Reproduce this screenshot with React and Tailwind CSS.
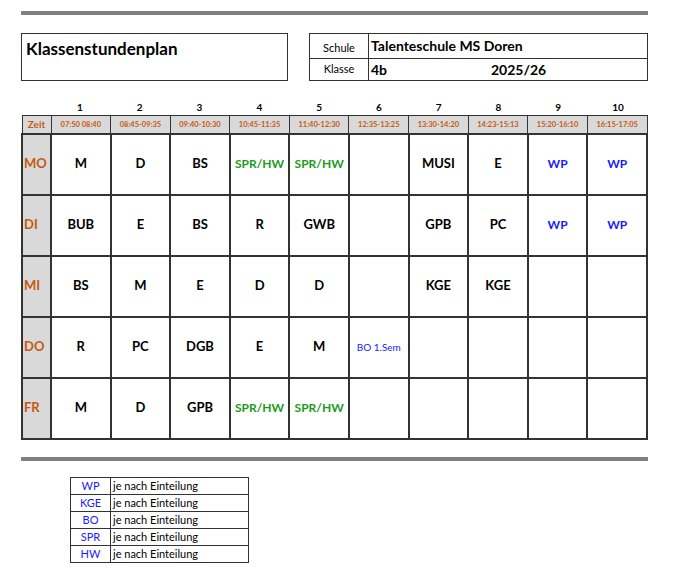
const TIMES = ['07:50 08:40', '08:45-09:35', '09:40-10:30', '10:45-11:35', '11:40-12:30', '12:35-13:25', '13:30-14:20', '14:23-15:13', '15:20-16:10', '16:15-17:05'];

const B = 'text-black text-[13px]';
const G = 'text-[#1a9c1a] text-[12px]';
const W = 'text-[#1a1aff] text-[12px]';

const ROWS = [
  ['MO', [['M', B], ['D', B], ['BS', B], ['SPR/HW', G], ['SPR/HW', G], null, ['MUSI', B], ['E', B], ['WP', W], ['WP', W]]],
  ['DI', [['BUB', B], ['E', B], ['BS', B], ['R', B], ['GWB', B], null, ['GPB', B], ['PC', B], ['WP', W], ['WP', W]]],
  ['MI', [['BS', B], ['M', B], ['E', B], ['D', B], ['D', B], null, ['KGE', B], ['KGE', B], null, null]],
  ['DO', [['R', B], ['PC', B], ['DGB', B], ['E', B], ['M', B], ['BO 1.Sem', W, true], null, null, null, null]],
  ['FR', [['M', B], ['D', B], ['GPB', B], ['SPR/HW', G], ['SPR/HW', G], null, null, null, null, null]],
];

const LEGEND = ['WP', 'KGE', 'BO', 'SPR', 'HW'];

export default function App() {
  return (
    <div className="w-[700px] h-[576px] bg-white relative" style={{ fontFamily: 'Lato, "Open Sans", sans-serif' }}>
      <div className="pt-[11px] pl-[21px] w-[648px]">
        <div className="h-[4px] bg-[#808080]" />

        {/* header boxes */}
        <div className="flex justify-between mt-[18px] h-[48px]">
          <div className="w-[267px] border border-[#333] px-1 pt-0.5 text-[17px] font-bold">Klassenstundenplan</div>
          <div className="w-[339px] border border-[#333] flex flex-col">
            <div className="flex flex-1 border-b border-[#333]">
              <div className="w-[59px] border-r border-[#333] text-[11px] flex items-end justify-center pb-0.5">Schule</div>
              <div className="flex-1 px-0.5 text-[14px] font-bold leading-[24px]">Talenteschule MS Doren</div>
            </div>
            <div className="flex flex-1">
              <div className="w-[59px] border-r border-[#333] text-[11px] flex items-center justify-center">Klasse</div>
              <div className="flex-1 px-0.5 text-[14px] font-bold leading-[21px] flex">
                <span className="w-[120px]">4b</span>
                <span>2025/26</span>
              </div>
            </div>
          </div>
        </div>

        {/* numbers */}
        <div className="flex mt-[19px] h-[15px] text-[10px] font-bold">
          <div className="w-[29px]" />
          {TIMES.map((_, i) => (
            <div key={i} className="flex-1 text-center">{i + 1}</div>
          ))}
        </div>

        <table className="w-[627px] border-collapse table-fixed">
          <colgroup>
            <col className="w-[29px]" />
            {TIMES.map((_, i) => <col key={i} />)}
          </colgroup>
          <tbody>
            <tr className="h-[18px] bg-[#d9d9d9] text-[#c55a11]">
              <td className="border border-[#333] text-[10px] font-bold text-center">Zeit</td>
              {TIMES.map(t => (
                <td key={t} className="border border-[#333] text-[7.5px] font-bold text-center whitespace-nowrap">{t}</td>
              ))}
            </tr>
            {ROWS.map(([day, cells]) => (
              <tr key={day} className="h-[61px]">
                <td className="border-2 border-[#333] bg-[#d9d9d9] text-[#c55a11] text-[13px] font-bold pl-[1px]">{day}</td>
                {cells.map((c, i) => (
                  <td key={i} className={`border-2 border-[#333] text-center ${c ? c[1] : ''} ${c && c[2] ? '!text-[10px]' : 'font-bold'}`}>
                    {c ? c[0] : ''}
                  </td>
                ))}
              </tr>
            ))}
          </tbody>
        </table>

        <div className="h-[4px] bg-[#808080] mt-[17px]" />

        <table className="ml-[49px] mt-[16px] w-[179px] border-collapse text-[11px] leading-[16px]">
          <tbody>
            {LEGEND.map(l => (
              <tr key={l}>
                <td className="w-[40px] border border-[#333] text-center text-[#1a1aff]">{l}</td>
                <td className="border border-[#333] pl-0.5">je nach Einteilung</td>
              </tr>
            ))}
          </tbody>
        </table>
      </div>
    </div>
  );
}
